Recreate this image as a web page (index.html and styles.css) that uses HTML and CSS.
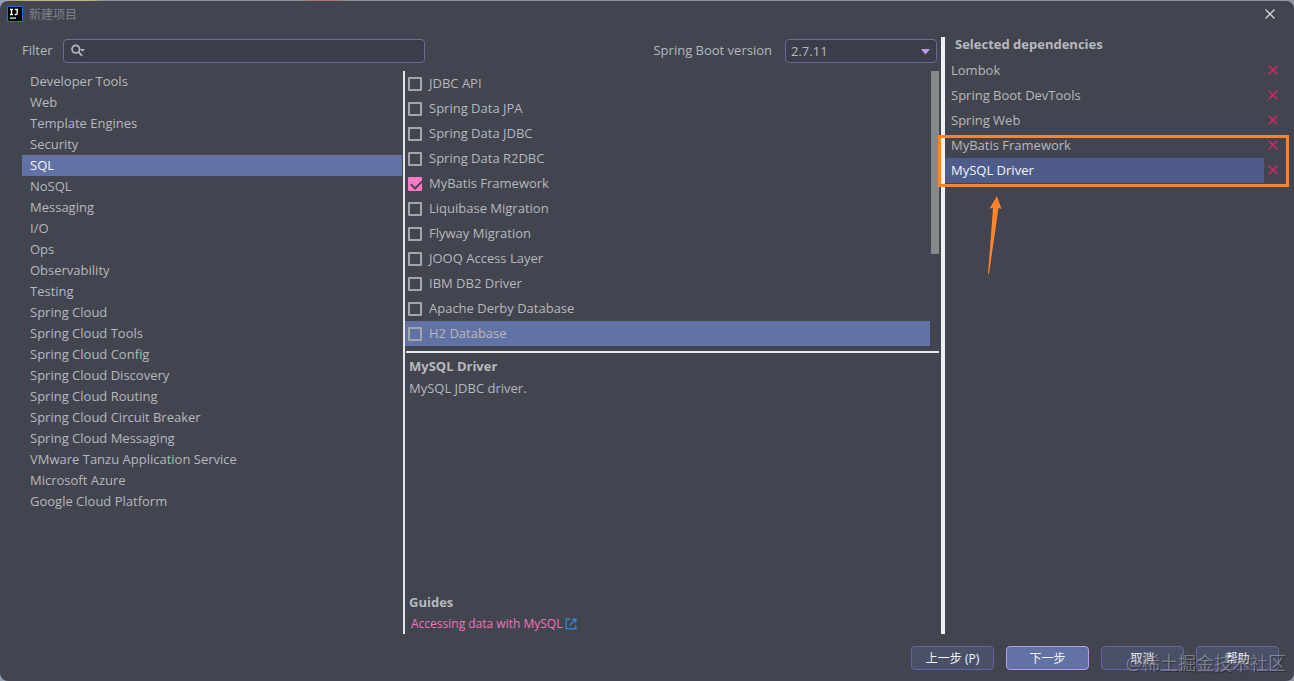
FILE: index.html
```html
<!DOCTYPE html>
<html lang="zh-CN">
<head>
  <meta charset="UTF-8" />
  <meta name="viewport" content="width=device-width, initial-scale=1.0"/>
  <title>新建项目</title>
  <link rel="stylesheet" href="styles.css">
</head>
<body>
  <div class="dialog">
    <header class="titlebar">
      <svg class="logo" width="16" height="16" viewBox="0 0 16 16" aria-hidden="true">
        <rect x="0.5" y="0.5" width="15" height="15" fill="#000" stroke="#1f6fd0"/>
        <path d="M3 3.5h3M4.5 3.5v5M3 8.5h3M8 3.5h3M10.2 3.5v3.7q0 1.3-1.3 1.3H7.6" fill="none" stroke="#fff" stroke-width="1.3"/>
        <rect x="3" y="11.5" width="6" height="1.2" fill="#fff"/>
      </svg>
      <span class="window-title">新建项目</span>
      <button class="close-button" aria-label="关闭">
        <svg width="10" height="10" viewBox="0 0 10 10"><path d="M0.5 0.5l9 9M9.5 0.5l-9 9" fill="none" stroke="#d0d2d8" stroke-width="1.3"/></svg>
      </button>
    </header>

    <main class="content">
      <section class="picker">
        <div class="toolbar">
          <label class="filter-label" for="filter">Filter</label>
          <div class="search-box">
            <svg width="16" height="14" viewBox="0 0 16 14" aria-hidden="true">
              <circle cx="4.8" cy="5.2" r="3.8" fill="none" stroke="#b4b8c0" stroke-width="1.7"/>
              <path d="M7.5 8l3.6 3.8" stroke="#b4b8c0" stroke-width="1.8"/>
              <path d="M9 5h5l-2.500 2.800z" fill="#b4b8c0"/>
            </svg>
            <input id="filter" type="text">
          </div>
          <label class="version-label" for="version">Spring Boot version</label>
          <div class="select-box">
            <select id="version">
              <option>2.7.11</option>
            </select>
            <svg width="9" height="6" viewBox="0 0 9 6" aria-hidden="true"><path d="M0 0h9L4.5 5.5z" fill="#b99cf0"/></svg>
          </div>
        </div>

        <div class="columns">
          <nav class="categories">
            <button>Developer Tools</button>
            <button>Web</button>
            <button>Template Engines</button>
            <button>Security</button>
            <button class="selected">SQL</button>
            <button>NoSQL</button>
            <button>Messaging</button>
            <button>I/O</button>
            <button>Ops</button>
            <button>Observability</button>
            <button>Testing</button>
            <button>Spring Cloud</button>
            <button>Spring Cloud Tools</button>
            <button>Spring Cloud Config</button>
            <button>Spring Cloud Discovery</button>
            <button>Spring Cloud Routing</button>
            <button>Spring Cloud Circuit Breaker</button>
            <button>Spring Cloud Messaging</button>
            <button>VMware Tanzu Application Service</button>
            <button>Microsoft Azure</button>
            <button>Google Cloud Platform</button>
          </nav>

          <div class="right-column">
            <div class="options-wrap">
              <div class="options">
                <label><input type="checkbox"><span>JDBC API</span></label>
                <label><input type="checkbox"><span>Spring Data JPA</span></label>
                <label><input type="checkbox"><span>Spring Data JDBC</span></label>
                <label><input type="checkbox"><span>Spring Data R2DBC</span></label>
                <label><input type="checkbox" checked><span>MyBatis Framework</span></label>
                <label><input type="checkbox"><span>Liquibase Migration</span></label>
                <label><input type="checkbox"><span>Flyway Migration</span></label>
                <label><input type="checkbox"><span>JOOQ Access Layer</span></label>
                <label><input type="checkbox"><span>IBM DB2 Driver</span></label>
                <label><input type="checkbox"><span>Apache Derby Database</span></label>
                <label class="selected"><input type="checkbox"><span>H2 Database</span></label>
              </div>
              <div class="scrollbar"><div class="thumb"></div></div>
            </div>
            <div class="details">
              <h2>MySQL Driver</h2>
              <p>MySQL JDBC driver.</p>
              <h2 class="guides-title">Guides</h2>
              <a href="#">Accessing data with MySQL
                <svg width="12" height="12" viewBox="0 0 12 12" aria-hidden="true"><path d="M5 1.2H1.2v9.6h9.6V7M7 1.2h3.8V5M10.6 1.4L4.4 7.6" fill="none" stroke="#2a86d1" stroke-width="1.4"/></svg>
              </a>
            </div>
          </div>
        </div>
      </section>

      <aside class="selected-panel">
        <h2>Selected dependencies</h2>
        <ul class="dependencies">
          <li><span>Lombok</span><button aria-label="Remove Lombok"><svg width="10" height="10" viewBox="0 0 10 10"><path d="M0.8 0.8l8.4 8.4M9.2 0.8l-8.4 8.4"/></svg></button></li>
          <li><span>Spring Boot DevTools</span><button aria-label="Remove Spring Boot DevTools"><svg width="10" height="10" viewBox="0 0 10 10"><path d="M0.8 0.8l8.4 8.4M9.2 0.8l-8.4 8.4"/></svg></button></li>
          <li><span>Spring Web</span><button aria-label="Remove Spring Web"><svg width="10" height="10" viewBox="0 0 10 10"><path d="M0.8 0.8l8.4 8.4M9.2 0.8l-8.4 8.4"/></svg></button></li>
          <li><span>MyBatis Framework</span><button aria-label="Remove MyBatis Framework"><svg width="10" height="10" viewBox="0 0 10 10"><path d="M0.8 0.8l8.4 8.4M9.2 0.8l-8.4 8.4"/></svg></button></li>
          <li class="selected"><span>MySQL Driver</span><button aria-label="Remove MySQL Driver"><svg width="10" height="10" viewBox="0 0 10 10"><path d="M0.8 0.8l8.4 8.4M9.2 0.8l-8.4 8.4"/></svg></button></li>
        </ul>
        <div class="highlight"></div>
        <svg class="arrow" width="16" height="80" viewBox="0 0 16 80" aria-hidden="true"><path d="M11 0l4.500 13-3-1L3 78H2L7 12l-3.500.5z" fill="#ff8328"/></svg>
      </aside>
    </main>

    <footer class="buttons">
      <button>上一步 (P)</button>
      <button class="primary">下一步</button>
      <button>取消</button>
      <button>帮助</button>
    </footer>
    <div class="watermark">@稀土掘金技术社区</div>
  </div>
</body>
</html>
```

FILE: styles.css
```css
* {
  box-sizing: border-box;
}
body {
  margin: 0;
  padding-top: 1px;
  min-height: 100vh;
  display: flex;
  background: linear-gradient(90deg, #8fa0b8 0, #b9b48a 2%, #b9b48a 7%, #8f949f 8%, #8f949f 23%, #a87a78 24%, #a87a78 26%, #8f949f 27%, #8f949f 100%);
  color: #b6b9be;
  font-family: "Open Sans", "Noto Sans CJK SC", sans-serif;
  font-size: 13px;
  line-height: 20px;
}
button, input, select {
  font: inherit;
  color: inherit;
  margin: 0;
}
button {
  background: none;
  border: none;
  padding: 0;
  cursor: pointer;
}
h2, p, ul {
  margin: 0;
  padding: 0;
}
h2 {
  font-size: 13px;
  line-height: 20px;
}
svg {
  display: block;
  flex: none;
}
.dialog {
  position: relative;
  flex: 1;
  display: flex;
  flex-direction: column;
  background: #42444f;
  border-radius: 8px;
}

/* title bar */
.titlebar {
  display: flex;
  align-items: center;
  gap: 6px;
  height: 26px;
  padding: 0 19px 0 7px;
}
.window-title {
  flex: 1;
  padding-top: 1px;
  color: #7f828a;
  font-size: 12px;
}

/* main area */
.content {
  flex: 1;
  display: grid;
  grid-template-columns: minmax(0, 945fr) minmax(0, 349fr);
  margin-top: 10px;
}
.picker {
  display: flex;
  flex-direction: column;
  padding: 2px 2px 0 22px;
  border-right: 4px solid #f0f1f4;
}
.toolbar {
  display: flex;
  align-items: center;
  height: 24px;
  padding-right: 2px;
}
.filter-label {
  width: 28px;
}
.filter-label,
.version-label {
  line-height: 18px;
  padding-bottom: 2px;
}
.search-box {
  flex: 0 1 362px;
  height: 24px;
  margin-left: 13px;
  padding-left: 7px;
  display: flex;
  align-items: center;
  background: #3c3d4a;
  border: 1px solid #7067a0;
  border-radius: 4px;
}
.search-box input {
  flex: 1;
  min-width: 0;
  height: 20px;
  padding: 0 4px;
  background: none;
  border: none;
  outline: none;
}
.version-label {
  margin-left: auto;
}
.select-box {
  position: relative;
  width: 152px;
  margin-left: 13px;
}
.select-box select {
  appearance: none;
  display: block;
  width: 100%;
  height: 24px;
  padding: 0 5px;
  background: #3c3d4a;
  border: 1px solid #7067a0;
  border-radius: 4px;
}
.select-box svg {
  position: absolute;
  right: 7px;
  top: 10px;
  pointer-events: none;
}
.columns {
  flex: 1;
  display: grid;
  grid-template-columns: minmax(0, 380fr) minmax(0, 536fr);
  gap: 1px;
  margin-top: 8px;
}
.categories button {
  display: block;
  width: 100%;
  height: 21px;
  padding: 0 8px 1px;
  line-height: 20px;
  text-align: left;
}
.categories .selected {
  background: #6272a4;
  color: #f4f5f8;
}
.right-column {
  display: flex;
  flex-direction: column;
  border-left: 2px solid #e6e7eb;
}
.options-wrap {
  display: flex;
  gap: 1px;
}
.options {
  flex: 1;
}
.options label {
  display: flex;
  align-items: center;
  gap: 7px;
  height: 25px;
  padding-left: 3px;
}
.options span {
  padding-bottom: 1px;
}
.options .selected {
  background: #6272a4;
}
.options input {
  appearance: none;
  width: 14px;
  height: 14px;
  border: 2px solid #a1a6af;
  border-radius: 1px;
}
.options input:checked {
  position: relative;
  border-color: #ff79c6;
  background: #ff79c6;
}
.options input:checked::after {
  content: "";
  position: absolute;
  left: 1px;
  top: 1px;
  width: 9px;
  height: 5px;
  border: solid #42444f;
  border-width: 0 0 2px 2px;
  transform: rotate(-45deg);
}
.scrollbar {
  width: 8px;
}
.thumb {
  height: 183px;
  background: #87888a;
}
.details {
  flex: 1;
  display: flex;
  flex-direction: column;
  margin-top: 5px;
  margin-left: 1px;
  padding: 3px 3px 0;
  border-top: 2px solid #e6e7eb;
}
.details p {
  margin-top: 2px;
}
.guides-title {
  margin-top: auto;
}
.details a {
  display: flex;
  align-items: center;
  gap: 3px;
  margin-top: 2px;
  padding-left: 2px;
  color: #f075bb;
  font-size: 12px;
  text-decoration: none;
}

/* selected dependencies */
.selected-panel {
  position: relative;
}
.selected-panel h2 {
  padding: 0 10px 6px;
  line-height: 15px;
}
.dependencies {
  list-style: none;
}
.dependencies li {
  display: flex;
  padding-right: 16px;
}
.dependencies span {
  flex: 1;
  margin-right: 4px;
  padding-left: 6px;
  line-height: 25px;
}
.dependencies button {
  padding-bottom: 2px;
}
.dependencies .selected span {
  background: #4f5b88;
  color: #f4f5f8;
}
.dependencies path {
  fill: none;
  stroke: #e0245e;
  stroke-width: 1.5;
}
.highlight {
  position: absolute;
  left: -7px;
  right: 5px;
  top: 98px;
  height: 52px;
  border: 3px solid #ff8328;
}
.arrow {
  position: absolute;
  left: 41px;
  top: 159px;
}

/* footer */
.buttons {
  display: flex;
  justify-content: flex-end;
  gap: 12px;
  padding: 12px 15px 11px;
}
.buttons button {
  width: 83px;
  height: 24px;
  padding-top: 1px;
  background: #4b5069;
  border: 1px solid #6763a0;
  border-radius: 4px;
  color: #f4f5f8;
  font-size: 12px;
}
.buttons .primary {
  background: #6272a4;
  border-color: #b99cf0;
}
.watermark {
  position: absolute;
  right: 8px;
  bottom: 6px;
  color: rgba(200, 204, 214, 0.45);
  font-size: 18px;
  line-height: 24px;
  text-shadow: 1px 1px 1px rgba(0, 0, 0, 0.4);
  pointer-events: none;
}
```
